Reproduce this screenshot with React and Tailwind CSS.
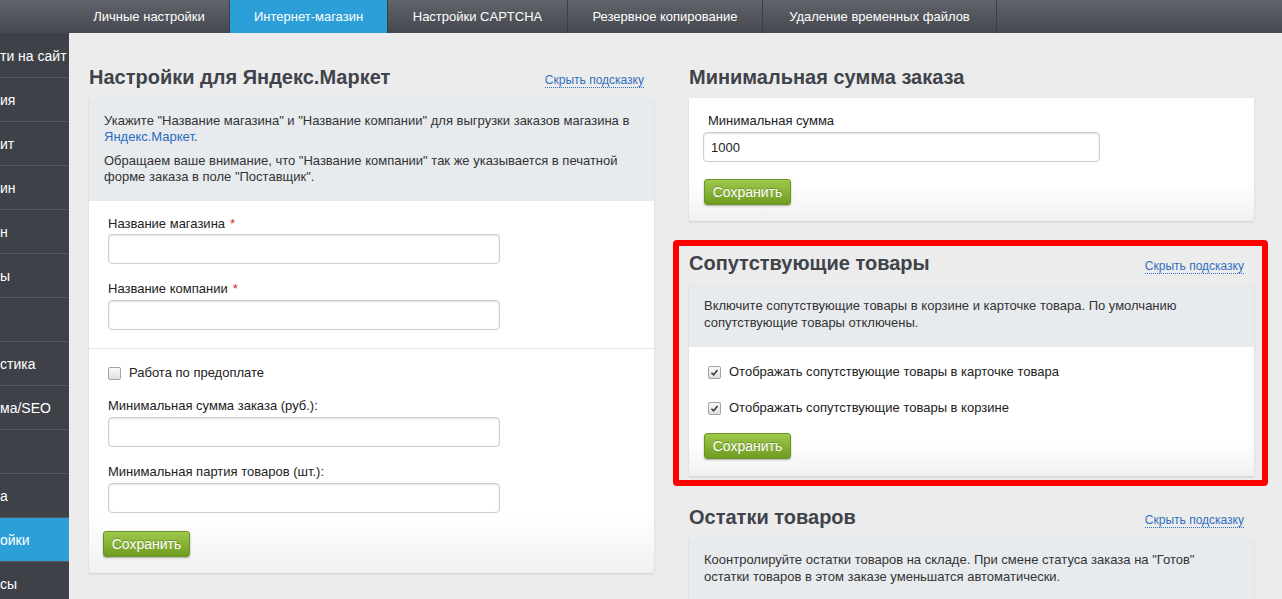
import React from "react";

const tabs = [
  { label: "Личные настройки", w: "w-[161px]" },
  { label: "Интернет-магазин", w: "w-[158px]", active: true },
  { label: "Настройки CAPTCHA", w: "w-[180px]" },
  { label: "Резервное копирование", w: "w-[195px]" },
  { label: "Удаление временных файлов", w: "w-[234px]" },
];

const sideRows = [
  { t: "ти на сайт" },
  { t: "ия" },
  { t: "ит" },
  { t: "ин" },
  { t: "н" },
  { t: "ы" },
  { t: "" },
  { t: "стика" },
  { t: "ма/SEO" },
  { t: "" },
  { t: "а" },
  { t: "ойки", active: true },
  { t: "сы" },
];

function Check({ checked }) {
  return (
    <span className="flex h-[13px] w-[13px] shrink-0 items-center justify-center rounded-[2px] border border-[#a3a3a3] bg-gradient-to-b from-[#fcfcfc] to-[#dedede]">
      {checked && (
        <svg viewBox="0 0 10 10" className="h-[9px] w-[9px]">
          <path d="M1.6 5.3 L4 7.6 L8.4 2.2" fill="none" stroke="#3a3a3a" strokeWidth="1.7" />
        </svg>
      )}
    </span>
  );
}

function SaveButton({ className = "" }) {
  return (
    <button
      type="button"
      className={
        "h-[26px] w-[87px] rounded-[3px] border border-[#6a9322] bg-gradient-to-b from-[#9ec94a] to-[#6f9c20] text-[14px] text-white shadow-[0_1px_2px_rgba(0,0,0,0.3)] [text-shadow:0_-1px_0_rgba(0,0,0,0.25)] " +
        className
      }
    >
      Сохранить
    </button>
  );
}

function TextInput({ value = "", className = "" }) {
  return (
    <input
      type="text"
      readOnly
      defaultValue={value}
      className={
        "block h-[30px] rounded-[4px] border border-[#cdcdcd] bg-white px-[7px] text-[13px] text-[#222] shadow-[inset_0_1px_2px_rgba(0,0,0,0.13)] outline-none " +
        className
      }
    />
  );
}

function Label({ children, required, className = "" }) {
  return (
    <div className={"text-[13px] leading-[16px] text-[#222] " + className}>
      {children}
      {required && <span className="ml-[5px] text-[#d9262b]">*</span>}
    </div>
  );
}

function TitleRow({ title, link = true }) {
  return (
    <div className="mb-[9px] flex items-baseline justify-between">
      <h2 className="text-[20px] font-bold leading-[24px] text-[#3f434a]">{title}</h2>
      {link && (
        <a className="mr-[10px] border-b border-dotted border-[#2f6fc0] text-[12px] leading-[14px] text-[#2f6fc0]">
          Скрыть подсказку
        </a>
      )}
    </div>
  );
}

function Hint({ children, className = "" }) {
  return (
    <div className={"bg-[#e8ebee] px-[15px] text-[13px] text-[#333] " + className}>{children}</div>
  );
}

export default function App() {
  return (
    <div className="flex h-[599px] w-[1282px] flex-col overflow-hidden bg-[#ececec] font-['Liberation_Sans',Arial,sans-serif]">
      {/* top bar */}
      <div className="flex h-[33px] shrink-0 bg-gradient-to-b from-[#606369] to-[#45484f] pl-[69px]">
        {tabs.map((t) => (
          <div
            key={t.label}
            className={
              "flex h-full items-center justify-center border-r border-[#3b3e44] text-[13px] text-white " +
              t.w +
              (t.active ? " bg-[#2c9fd8]" : "")
            }
          >
            {t.label}
          </div>
        ))}
      </div>

      <div className="flex min-h-0 flex-1">
        {/* sidebar */}
        <div className="w-[69px] shrink-0 bg-[#3e4147] pt-[1px]">
          {sideRows.map((r, i) => (
            <div
              key={i}
              className={
                "flex h-[44px] items-center overflow-hidden whitespace-nowrap border-b border-[#55585e] pt-[1px] text-[14px] text-white " +
                (r.active ? "bg-[#2c9fd8]" : "")
              }
            >
              {r.t}
            </div>
          ))}
        </div>

        {/* main */}
        <div className="flex gap-[35px] pl-[20px] pt-[32px]">
          {/* left column */}
          <div className="w-[565px]">
            <TitleRow title="Настройки для Яндекс.Маркет" />
            <div className="shadow-[0_1px_2px_rgba(0,0,0,0.13)]">
              <Hint className="pb-[16px] pt-[15px] leading-[16px]">
                <p>
                  Укажите "Название магазина" и "Название компании" для выгрузки заказов магазина в
                  <br />
                  <span className="text-[#2a6cc1]">Яндекс.Маркет</span>.
                </p>
                <p className="mt-[8px]">
                  Обращаем ваше внимание, что "Название компании" так же указывается в печатной
                  <br />
                  форме заказа в поле "Поставщик".
                </p>
              </Hint>
              <div className="bg-gradient-to-b from-white from-85% to-[#f0f0f0]">
                <div className="px-[19px] pb-[18px] pt-[15px]">
                  <Label required>Название магазина</Label>
                  <TextInput className="mt-[2px] w-[392px]" />
                  <Label required className="mt-[17px]">
                    Название компании
                  </Label>
                  <TextInput className="mt-[3px] w-[392px]" />
                </div>
                <div className="border-t border-[#e3e3e3] px-[19px] pb-[16px] pt-[16px]">
                  <div className="flex h-[16px] items-center gap-[8px] text-[13px] text-[#222]">
                    <Check />
                    <span>Работа по предоплате</span>
                  </div>
                  <Label className="mt-[17px]">Минимальная сумма заказа (руб.):</Label>
                  <TextInput className="mt-[3px] w-[392px]" />
                  <Label className="mt-[17px]">Минимальная партия товаров (шт.):</Label>
                  <TextInput className="mt-[3px] w-[392px]" />
                  <SaveButton className="-ml-[5px] mt-[18px]" />
                </div>
              </div>
            </div>
          </div>

          {/* right column */}
          <div className="w-[565px]">
            <section className="mb-[30px]">
              <TitleRow title="Минимальная сумма заказа" link={false} />
              <div className="bg-gradient-to-b from-white from-70% to-[#f0f0f0] px-[19px] pb-[16px] pt-[15px] shadow-[0_1px_2px_rgba(0,0,0,0.13)]">
                <Label>Минимальная сумма</Label>
                <TextInput value="1000" className="-ml-[5px] mt-[3px] w-[397px]" />
                <SaveButton className="-ml-[4px] mt-[17px]" />
              </div>
            </section>

            <section className="relative mb-[29px]">
              <TitleRow title="Сопутствующие товары" />
              <div className="shadow-[0_1px_2px_rgba(0,0,0,0.13)]">
                <Hint className="pb-[16px] pt-[13px] leading-[17px]">
                  Включите сопутствующие товары в корзине и карточке товара. По умолчанию
                  <br />
                  сопутствующие товары отключены.
                </Hint>
                <div className="bg-gradient-to-b from-white from-75% to-[#f0f0f0] px-[19px] pb-[17px] pt-[17px]">
                  <div className="flex h-[16px] items-center gap-[8px] text-[13px] text-[#222]">
                    <Check checked />
                    <span>Отображать сопутствующие товары в карточке товара</span>
                  </div>
                  <div className="mt-[20px] flex h-[16px] items-center gap-[8px] text-[13px] text-[#222]">
                    <Check checked />
                    <span>Отображать сопутствующие товары в корзине</span>
                  </div>
                  <SaveButton className="-ml-[4px] mt-[17px]" />
                </div>
              </div>
              <div className="pointer-events-none absolute -bottom-[10px] -left-[16px] -right-[14px] -top-[11px] rounded-[4px] border-[6px] border-[#ff0000]" />
            </section>

            <section>
              <TitleRow title="Остатки товаров" />
              <Hint className="pb-[20px] pt-[13px] leading-[17px] shadow-[0_1px_2px_rgba(0,0,0,0.13)]">
                Коонтролируйте остатки товаров на складе. При смене статуса заказа на "Готов"
                <br />
                остатки товаров в этом заказе уменьшатся автоматически.
              </Hint>
            </section>
          </div>
        </div>
      </div>
    </div>
  );
}
